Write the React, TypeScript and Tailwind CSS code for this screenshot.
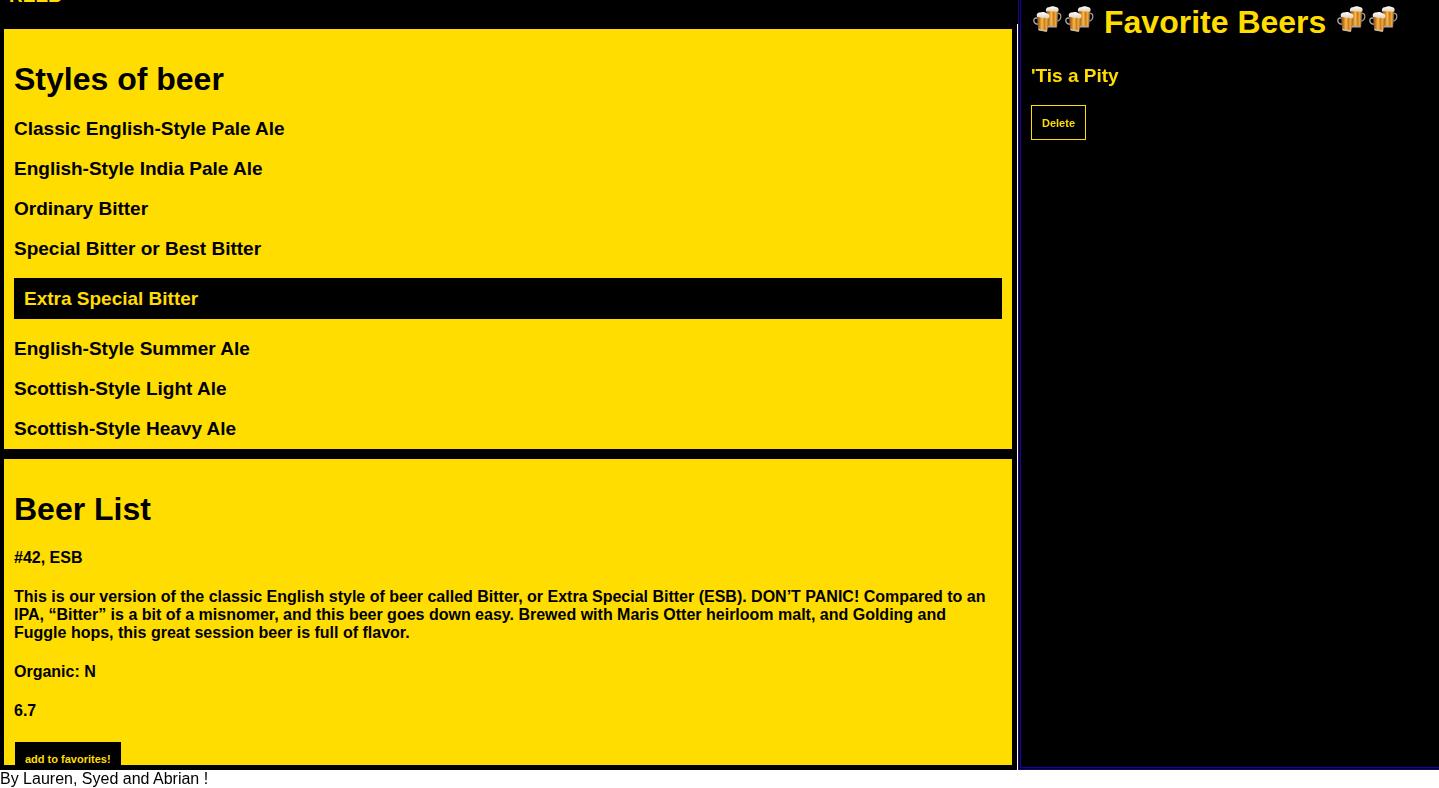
import { useState } from "react";

const styles = [
  "Classic English-Style Pale Ale",
  "English-Style India Pale Ale",
  "Ordinary Bitter",
  "Special Bitter or Best Bitter",
  "Extra Special Bitter",
  "English-Style Summer Ale",
  "Scottish-Style Light Ale",
  "Scottish-Style Heavy Ale",
];

function Mugs() {
  return (
    <svg viewBox="0 0 32 32" className="mb-2 size-8 shrink-0" aria-hidden="true">
      <defs>
        <linearGradient id="ale" x1="0" x2="1">
          <stop offset="0" stopColor="#8a4a10" />
          <stop offset=".2" stopColor="#d07f1c" />
          <stop offset=".4" stopColor="#f9bd4a" />
          <stop offset=".6" stopColor="#cf7c18" />
          <stop offset=".8" stopColor="#f0ae42" />
          <stop offset="1" stopColor="#8f5012" />
        </linearGradient>
        <linearGradient id="foam" x1="0" x2="0" y1="0" y2="1">
          <stop offset="0" stopColor="#ffffff" />
          <stop offset="1" stopColor="#e2cdb6" />
        </linearGradient>
      </defs>
      <path d="M26.500 11.500c4.500-1.200 4.500 6.500-.5 7.500" fill="none" stroke="#a19c98" strokeWidth="1.300" />
      <path d="M16 8.500 27 8 25.800 24.500 16 24z" fill="url(#ale)" stroke="#94785a" strokeWidth=".6" />
      <path d="M16 23.500 25.800 23.800v1.800L16 25.500z" fill="#b8a78f" />
      <path d="M15.300 9.800c-1.100-2.600.3-4.600 2.700-4.600 2.500-1.200 5.300-1.100 6.800-.1 2.600.2 3.500 2.500 2.300 4.300-2.900 1-7.600-.8-11.800.4z" fill="url(#foam)" />
      <path d="M6.500 16.200c-5.500-1.500-4.500 5.800.6 6" fill="none" stroke="#b2ada8" strokeWidth="1.300" />
      <path d="M6.500 13.500 18 15 16 29 7.500 27.500z" fill="url(#ale)" stroke="#a08464" strokeWidth=".6" />
      <path d="M7.400 26.800 16.200 28.300l-.3 1.700-8.300-1.500z" fill="#c9bda9" />
      <path d="M6.200 15.200c-1.300-2.400.2-4.700 2.600-4.600 2.400-.9 5.200-.6 6.600.6 2.700.2 3.900 2.500 2.600 4.800-1.500 1.100-3-.2-4.800.1-2.500.5-4.300-1.400-7-.9z" fill="url(#foam)" />
    </svg>
  );
}

const buttonClass =
  "border border-[#ffdd00] bg-black px-2.5 pt-[11px] pb-[9px] text-[11px] leading-[13px] font-bold text-[#ffdd00]";

export default function App() {
  const [selected, setSelected] = useState("Extra Special Bitter");
  const [favorites, setFavorites] = useState(["'Tis a Pity"]);

  return (
    <div className="bg-white font-['Liberation_Sans',Arial,sans-serif] text-black">
      <div className="grid grid-cols-[1018fr_421fr]">
        <div className="flex min-w-0 flex-col">
          <header className="flex h-6 flex-col justify-end overflow-hidden bg-black px-[9px]">
            <p className="pb-4 text-[19px] leading-6 font-bold text-[#ffdd00]">REEB</p>
          </header>
          <main className="mr-px flex flex-col gap-2.5 bg-black py-[5px] pr-[5px] pl-1">
            <section className="h-[420px] overflow-y-auto bg-[#ffdd00] px-2.5 pt-8 [scrollbar-width:none]">
              <h1 className="mb-[21px] text-[32px] leading-9 font-bold">Styles of beer</h1>
              <ul className="flex flex-col gap-[19px]">
                {styles.map((name) => (
                  <li key={name} className="flex flex-col">
                    <button
                      onClick={() => setSelected(name)}
                      className={
                        "text-left text-[19px] leading-[21px] font-bold " +
                        (name === selected ? "bg-black p-2.5 text-[#ffdd00]" : "")
                      }
                    >
                      {name}
                    </button>
                  </li>
                ))}
              </ul>
            </section>
            <section className="h-[306px] overflow-y-auto bg-[#ffdd00] px-2.5 pt-8 [scrollbar-width:none]">
              <h1 className="mb-[22px] text-[32px] leading-9 font-bold">Beer List</h1>
              <div className="flex flex-col items-start gap-[21px] text-base leading-[18px] font-bold">
                <h2>#42, ESB</h2>
                <p>
                  This is our version of the classic English style of beer called Bitter, or Extra Special Bitter
                  (ESB). DON’T PANIC! Compared to an IPA, “Bitter” is a bit of a misnomer, and this beer goes down
                  easy. Brewed with Maris Otter heirloom malt, and Golding and Fuggle hops, this great session beer is
                  full of flavor.
                </p>
                <p>Organic: N</p>
                <p>6.7</p>
                <button className={buttonClass} onClick={() => setFavorites([...favorites, "#42, ESB"])}>
                  add to favorites!
                </button>
              </div>
            </section>
          </main>
        </div>
        <aside className="min-w-0 border-b-3 border-l-3 border-double border-[#1a0099] bg-black px-2.5 text-[#ffdd00]">
          <h1 className="flex h-10 items-center pt-1 text-[32px] leading-9 font-bold whitespace-nowrap">
            <Mugs />
            <Mugs />
            <span className="px-[9px]">Favorite Beers</span>
            <Mugs />
            <Mugs />
          </h1>
          {favorites.map((name, i) => (
            <div key={i} className="flex flex-col items-start gap-[19px] pt-[25px]">
              <h2 className="text-[19px] leading-[21px] font-bold">{name}</h2>
              <button className={buttonClass} onClick={() => setFavorites(favorites.filter((_, j) => j !== i))}>
                Delete
              </button>
            </div>
          ))}
        </aside>
      </div>
      <footer className="text-base leading-[18px]">By Lauren, Syed and Abrian !</footer>
    </div>
  );
}
